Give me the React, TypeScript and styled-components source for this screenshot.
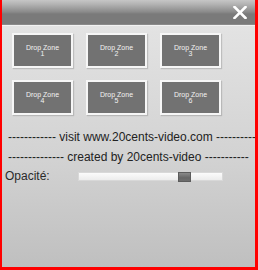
import React from "react";
import styled, { createGlobalStyle } from "styled-components";

const Global = createGlobalStyle`
  html, body { margin: 0; padding: 0; background: #fff; }
  body { font-family: "Liberation Sans", Arial, sans-serif; }
`;

const Frame = styled.div`
  width: 258px;
  height: 270px;
  box-sizing: border-box;
  border-left: 2px solid #ff0000;
  border-right: 3px solid #ff0000;
  border-bottom: 3px solid #ff0000;
  display: flex;
  flex-direction: column;
  overflow: hidden;
  background: linear-gradient(180deg, #e6e6e6 0%, #d2d2d2 60%, #bfbfbf 100%);
`;

const TitleBar = styled.div`
  height: 25px;
  flex: 0 0 25px;
  display: flex;
  justify-content: flex-end;
  align-items: center;
  padding-right: 8px;
  background: linear-gradient(180deg, #c6c6c6 0px, #b4b4b4 4px, #8a8a8a 12px, #7a7a7a 14px, #7a7a7a 24px, #9a9a9a 25px);
  border-bottom: 1px solid #f2f2f2;
`;

const CloseIcon = styled.svg`
  width: 14px;
  height: 13px;
  display: block;
`;

const Body = styled.div`
  padding: 7px 0 0 10px;
  display: flex;
  flex-direction: column;
`;

const Grid = styled.div`
  display: grid;
  grid-template-columns: repeat(3, 61px);
  grid-auto-rows: 35px;
  column-gap: 13px;
  row-gap: 12px;
`;

const Zone = styled.div`
  box-sizing: border-box;
  border: 2px solid #f6f6f6;
  background: #727272;
  box-shadow: 1px 1px 1px rgba(0, 0, 0, 0.15);
  display: flex;
  flex-direction: column;
  align-items: center;
  justify-content: center;
  color: #f2f2f2;
  font-size: 7px;
  line-height: 6px;
  text-align: center;
`;

const Banner = styled.div<{ $top: number }>`
  margin-left: -4px;
  width: 247px;
  white-space: nowrap;
  font-size: 12px;
  line-height: 14px;
  color: #222;
  margin-top: ${(p) => p.$top}px;
`;

const OpacityRow = styled.div`
  margin-left: -7px;
  margin-top: 6px;
  display: flex;
  align-items: center;
  height: 12px;
`;

const Label = styled.span`
  font-size: 12px;
  color: #2a2a2a;
  width: 73px;
`;

const Track = styled.div`
  position: relative;
  width: 145px;
  height: 9px;
  box-sizing: border-box;
  background: linear-gradient(180deg, #fbfbfb, #ececec);
  border: 1px solid #d8d8d8;
`;

const Thumb = styled.div`
  position: absolute;
  top: -1px;
  height: 10px;
  width: 13px;
  background: linear-gradient(180deg, #8a8a8a, #666 60%, #6e6e6e);
  border: 1px solid #5c5c5c;
  box-sizing: border-box;
`;

export default function App() {
  const zones = [1, 2, 3, 4, 5, 6];
  return (
    <>
      <Global />
      <Frame>
        <TitleBar>
          <CloseIcon viewBox="0 0 14 13">
            <path d="M1.5 1 L12.5 12 M12.5 1 L1.5 12" stroke="#fff" strokeWidth="2.6" strokeLinecap="square" />
          </CloseIcon>
        </TitleBar>
        <Body>
          <Grid>
            {zones.map((z) => (
              <Zone key={z}>
                <span>Drop Zone</span>
                <span>{z}</span>
              </Zone>
            ))}
          </Grid>
          <Banner $top={15}>------------ visit www.20cents-video.com ----------</Banner>
          <Banner $top={6}>-------------- created by 20cents-video -----------</Banner>
          <OpacityRow>
            <Label>Opacité:</Label>
            <Track>
              <Thumb style={{ left: "99px" }} />
            </Track>
          </OpacityRow>
        </Body>
      </Frame>
    </>
  );
}
